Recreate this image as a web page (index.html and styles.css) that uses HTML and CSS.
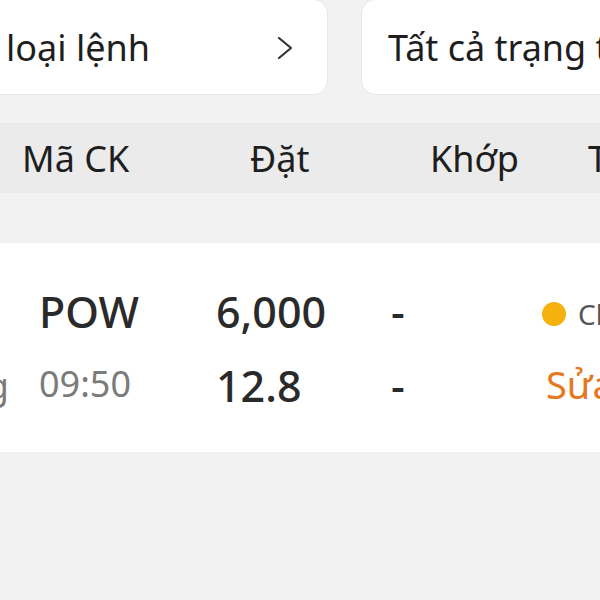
FILE: index.html
```html
<!DOCTYPE html>
<html lang="vi">
<head>
<meta charset="utf-8">
<title>Sổ lệnh</title>
<link rel="stylesheet" href="styles.css">
</head>
<body>
<div class="page">
  <div class="filters">
    <div class="filter filter-type">
      <span class="filter-label">loại lệnh</span>
      <svg class="chevron" width="16" height="24" viewBox="0 0 16 24"><path d="M2 2 L14 12 L2 22" fill="none" stroke="#333" stroke-width="2.2" stroke-linecap="round" stroke-linejoin="round"/></svg>
    </div>
    <div class="filter filter-status">
      <span class="filter-label">Tất cả trạng thái</span>
    </div>
  </div>

  <div class="table-head">
    <span>Mã CK</span>
    <span>Đặt</span>
    <span>Khớp</span>
    <span>Trạng thái</span>
  </div>

  <div class="orders">
    <div class="order-row">
      <span class="side"></span>
      <span class="symbol">POW</span>
      <span class="num">6,000</span>
      <span class="num dash">-</span>
      <span class="status"><i class="dot"></i><span class="status-text">Chờ khớp</span></span>
    </div>
    <div class="order-row">
      <span class="side">Thường</span>
      <span class="time">09:50</span>
      <span class="num">12.8</span>
      <span class="num dash">-</span>
      <span class="action">Sửa</span>
    </div>
  </div>
</div>
</body>
</html>
```
FILE: styles.css
```css
html, body {
  margin: 0;
  padding: 0;
  background: #f2f2f2;
  height: 100%;
  overflow: hidden;
}
body {
  font-family: "Noto Sans", "Open Sans", sans-serif;
  color: #222;
}
.page {
  width: 600px;
  overflow: hidden;
}

/* filters */
.filters {
  display: flex;
  gap: 35px;
  margin-left: -40px;
  width: 800px;
}
.filter {
  height: 94px;
  background: #fff;
  box-shadow: 0 0 0 1px #e7e7e7;
  display: flex;
  align-items: center;
  font-size: 36px;
  color: #1e1e1e;
  white-space: nowrap;
  box-sizing: border-box;
}
.filter-type {
  width: 367px;
  padding-left: 46px;
  padding-right: 34px;
  justify-content: space-between;
  border-radius: 0 14px 14px 0;
}
.filter-status {
  flex: 1;
  padding-left: 26px;
  border-radius: 14px 0 0 14px;
}
.chevron { display: block; margin-top: 2px; }

/* table head */
.table-head {
  margin-top: 29px;
  height: 70px;
  background: #ebebeb;
  display: grid;
  grid-template-columns: 228px 180px 158px 1fr;
  align-items: center;
  padding-left: 22px;
  font-size: 36px;
  color: #1e1e1e;
  white-space: nowrap;
  overflow: hidden;
}

/* orders */
.orders {
  margin-top: 50px;
  background: #fff;
  height: 209px;
  box-sizing: border-box;
  padding-top: 39px;
  display: flex;
  flex-direction: column;
  gap: 14px;
  overflow: hidden;
}
.order-row {
  display: grid;
  grid-template-columns: 239px 177px 175px 151px 1fr;
  margin-left: -200px;
  width: 900px;
  height: 60px;
  align-items: start;
  white-space: nowrap;
}
.order-row > * { line-height: 60px; }
.side {
  text-align: right;
  padding-right: 30px;
  font-size: 36px;
  color: #7a7a7a;
}
.symbol, .num {
  font-size: 43px;
  font-weight: 500;
  color: #2a2a2a;
}
.time {
  font-size: 36px;
  color: #7b7b7b;
  line-height: 55px;
}
.status {
  display: flex;
  align-items: center;
  gap: 12px;
  height: 64px;
}
.dot {
  display: block;
  width: 24px;
  height: 24px;
  border-radius: 50%;
  background: #f5b10d;
}
.status-text {
  font-size: 28px;
  color: #555;
}
.action {
  font-size: 38px;
  color: #e8781f;
  padding-left: 4px;
  line-height: 56px;
}
```
